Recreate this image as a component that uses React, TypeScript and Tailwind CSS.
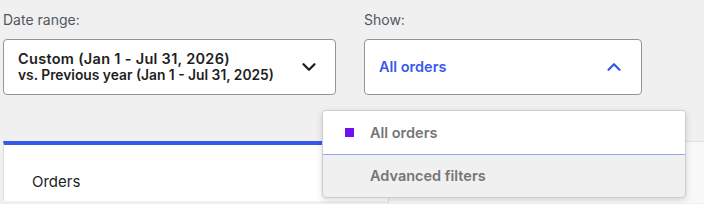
import React from 'react';
import { ChevronDown, ChevronUp } from 'lucide-react';

const App: React.FC = () => {
  return (
    <div className="w-[704px] h-[204px] overflow-hidden bg-[#f0f0f0] font-['Inter',sans-serif] text-[#1e1e1e]">
      <div className="flex gap-[28px] pl-[3px] pt-[11px]">
        <div className="flex flex-col">
          <label className="text-[14px] leading-[18px] text-[#50575e] mb-[10px]">Date range:</label>
          <button className="w-[333px] h-[56px] bg-white border border-[#949494] rounded-[4px] flex items-center justify-between pl-[14px] pr-[15px] text-left">
            <span className="flex flex-col font-semibold leading-[17px]">
              <span className="text-[14.5px] tracking-[0.3px]">Custom (Jan 1 - Jul 31, 2026)</span>
              <span className="text-[13.8px] tracking-[0px]">vs. Previous year (Jan 1 - Jul 31, 2025)</span>
            </span>
            <ChevronDown size={22} strokeWidth={2.5} className="text-[#1e1e1e]" />
          </button>
        </div>
        <div className="flex flex-col relative">
          <label className="text-[14px] leading-[18px] text-[#50575e] mb-[10px]">Show:</label>
          <button className="w-[278px] h-[56px] bg-white border border-[#949494] rounded-[4px] flex items-center justify-between pl-[14px] pr-[16px]">
            <span className="text-[14.5px] font-semibold text-[#3858e9]">All orders</span>
            <ChevronUp size={22} strokeWidth={2.5} className="text-[#3858e9]" />
          </button>
          <div className="absolute left-[-42px] top-[99px] w-[364px] h-[88px] z-10 bg-[#f0f0f0] border border-[#cccccc] rounded-[4px] shadow-[0_2px_6px_rgba(0,0,0,0.15)] overflow-hidden flex flex-col">
            <div className="h-[44px] bg-white flex items-center pl-[22px] border-b border-[#93a6f4]">
              <span className="w-[9px] h-[9px] bg-[#7010f0] mr-[16px]" />
              <span className="text-[14.5px] font-semibold text-[#757575]">All orders</span>
            </div>
            <div className="flex-1 flex items-center pl-[47px]">
              <span className="text-[14.5px] font-semibold text-[#757575]">Advanced filters</span>
            </div>
          </div>
        </div>
      </div>
      <div className="flex mt-[46px] ml-[3px]">
        <div className="w-[385px] h-[60px] bg-white border-l border-[#dddddd] border-t-4 border-t-[#3858e9] pl-[28px] pt-[24px]">
          <span className="text-[15px]">Orders</span>
        </div>
        <div className="flex-1 h-[62px] bg-[#f8f8f8] border-l border-t border-[#e0e0e0]" />
      </div>
    </div>
  );
};

export default App;
